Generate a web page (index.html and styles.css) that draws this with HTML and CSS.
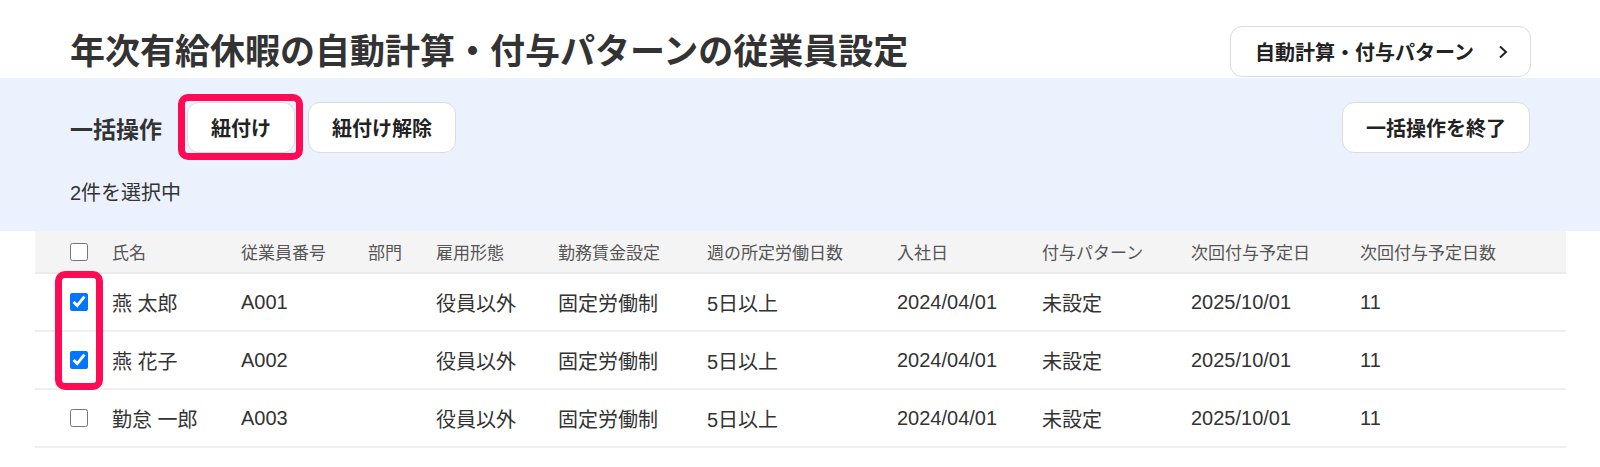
FILE: index.html
```html
<!DOCTYPE html>
<html lang="ja">
<head>
  <meta charset="UTF-8" />
  <meta name="viewport" content="width=device-width, initial-scale=1" />
  <title>年次有給休暇の自動計算・付与パターンの従業員設定</title>
  <link rel="stylesheet" href="styles.css">
</head>
<body>
  <div class="page">
    <header class="page-head">
      <h1>年次有給休暇の自動計算・付与パターンの従業員設定</h1>
      <button class="btn btn-link">
        自動計算・付与パターン
        <svg width="10" height="14" viewBox="0 0 10 14"><path d="M2 1.5 L8 7 L2 12.5" fill="none" stroke="#222" stroke-width="2"/></svg>
      </button>
    </header>

    <section class="bulk">
      <div class="bulk-row">
        <span class="bulk-label">一括操作</span>
        <span class="mark"><button class="btn">紐付け</button></span>
        <button class="btn">紐付け解除</button>
        <button class="btn btn-end">一括操作を終了</button>
      </div>
      <div class="bulk-count">2件を選択中</div>
    </section>

    <div class="list">
      <table>
        <colgroup>
          <col style="width:77px">
          <col style="width:129px">
          <col style="width:127px">
          <col style="width:68px">
          <col style="width:122px">
          <col style="width:149px">
          <col style="width:190px">
          <col style="width:145px">
          <col style="width:149px">
          <col style="width:169px">
          <col>
        </colgroup>
        <thead>
          <tr>
            <th class="check"><input type="checkbox" /></th>
            <th>氏名</th>
            <th>従業員番号</th>
            <th>部門</th>
            <th>雇用形態</th>
            <th>勤務賃金設定</th>
            <th>週の所定労働日数</th>
            <th>入社日</th>
            <th>付与パターン</th>
            <th>次回付与予定日</th>
            <th>次回付与予定日数</th>
          </tr>
        </thead>
        <tbody>
          <tr>
            <td class="check"><input type="checkbox" checked /></td>
            <td>燕 太郎</td>
            <td>A001</td>
            <td></td>
            <td>役員以外</td>
            <td>固定労働制</td>
            <td>5日以上</td>
            <td>2024/04/01</td>
            <td>未設定</td>
            <td>2025/10/01</td>
            <td>11</td>
          </tr>
          <tr>
            <td class="check"><input type="checkbox" checked /></td>
            <td>燕 花子</td>
            <td>A002</td>
            <td></td>
            <td>役員以外</td>
            <td>固定労働制</td>
            <td>5日以上</td>
            <td>2024/04/01</td>
            <td>未設定</td>
            <td>2025/10/01</td>
            <td>11</td>
          </tr>
          <tr>
            <td class="check"><input type="checkbox" /></td>
            <td>勤怠 一郎</td>
            <td>A003</td>
            <td></td>
            <td>役員以外</td>
            <td>固定労働制</td>
            <td>5日以上</td>
            <td>2024/04/01</td>
            <td>未設定</td>
            <td>2025/10/01</td>
            <td>11</td>
          </tr>
        </tbody>
      </table>
      <!-- 選択中のチェックボックスを囲む注釈枠 -->
      <div class="mark-checks"></div>
    </div>
  </div>
</body>
</html>
```

FILE: styles.css
```css
body {
  margin: 0;
  font-family: "Liberation Sans", "Noto Sans CJK JP", sans-serif;
  color: #333;
  background: #fff;
}
.page {
  min-height: 467px;
}
.btn {
  font-family: inherit;
  font-size: 20px;
  font-weight: 700;
  color: #222;
  background: #fff;
  border: 1px solid #dcdcdc;
  border-radius: 12px;
  height: 51px;
  padding: 0 23px;
  cursor: pointer;
}

/* 見出し */
.page-head {
  display: flex;
  align-items: center;
  justify-content: space-between;
  padding: 26px 69px 1px 70px;
}
.page-head h1 {
  margin: 0;
  font-size: 35px;
  line-height: 51px;
  font-weight: 700;
  color: #333;
}
.btn-link {
  display: flex;
  align-items: center;
  gap: 24px;
  padding: 0 22px 0 24px;
}
.btn-link svg {
  display: block;
}

/* 一括操作 */
.bulk {
  background: #ebf2fd;
  padding: 24px 70px 23px 70px;
}
.bulk-row {
  display: flex;
  align-items: center;
  gap: 13px;
}
.bulk-label {
  font-size: 23px;
  font-weight: 700;
  color: #333;
  margin-right: 12px;
}
.mark {
  position: relative;
  display: inline-block;
}
.mark .btn {
  display: block;
}
.mark::after {
  content: "";
  position: absolute;
  top: -8px;
  left: -9px;
  right: -8px;
  bottom: -7px;
  border: 7px solid #ff0a55;
  border-radius: 10px;
  pointer-events: none;
}
.btn-end {
  margin-left: auto;
}
.bulk-count {
  margin-top: 25px;
  font-size: 20px;
  line-height: 30px;
  color: #333;
}

/* 一覧 */
.list {
  position: relative;
  padding: 0 34px 0 35px;
}
table {
  width: 100%;
  table-layout: fixed;
  border-collapse: collapse;
}
th, td {
  text-align: left;
  padding: 0;
  white-space: nowrap;
}
th {
  height: 41px;
  font-size: 17px;
  font-weight: 400;
  color: #555;
  background: #f5f4f4;
  border-bottom: 2px solid #ebebeb;
}
td {
  height: 56px;
  font-size: 20px;
  color: #333;
  border-bottom: 2px solid #efefef;
}
.check {
  padding-left: 35px;
}
.check input {
  display: block;
  width: 18px;
  height: 18px;
  margin: 0;
}
.mark-checks {
  position: absolute;
  left: 55px;
  top: 40px;
  width: 48px;
  height: 119px;
  box-sizing: border-box;
  border: 7px solid #ff0a55;
  border-radius: 10px;
}
```
